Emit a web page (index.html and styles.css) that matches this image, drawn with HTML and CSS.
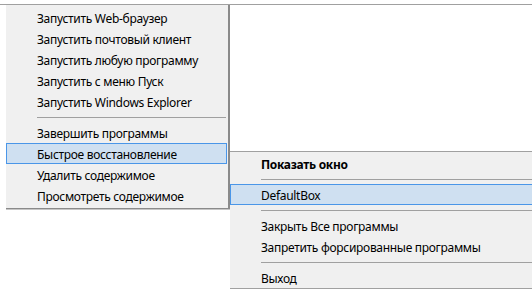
FILE: index.html
```html
<!DOCTYPE html>
<html lang="ru">
<head>
    <meta charset="UTF-8">
    <meta name="viewport" content="width=device-width, initial-scale=1.0">
    <title>Sandbox menu</title>
    <link rel="stylesheet" href="styles.css">
</head>
<body>
    <div class="topline"></div>

    <div class="menu menu-main">
        <div class="item">Запустить Web-браузер</div>
        <div class="item">Запустить почтовый клиент</div>
        <div class="item">Запустить любую программу</div>
        <div class="item">Запустить с меню Пуск</div>
        <div class="item">Запустить Windows Explorer</div>
        <div class="sep"></div>
        <div class="item">Завершить программы</div>
        <div class="item active">Быстрое восстановление</div>
        <div class="item">Удалить содержимое</div>
        <div class="item">Просмотреть содержимое</div>
    </div>

    <div class="menu menu-tray">
        <div class="item bold">Показать окно</div>
        <div class="sep"></div>
        <div class="item active">DefaultBox</div>
        <div class="sep"></div>
        <div class="item">Закрыть Все программы</div>
        <div class="item">Запретить форсированные программы</div>
        <div class="sep"></div>
        <div class="item">Выход</div>
    </div>
</body>
</html>
```

FILE: styles.css
```css
body {
    margin: 0;
    width: 532px;
    height: 290px;
    overflow: hidden;
    position: relative;
    background-color: white;
    font-family: "Noto Sans", sans-serif;
    font-size: 12px;
    letter-spacing: -0.3px;
    color: black;
}
.topline {
    margin-top: 4px;
    border-top: 1px solid #a0a0a0;
}
.menu {
    position: absolute;
    box-sizing: border-box;
    background-color: #f0f0f0;
}
.menu-main {
    left: 6px;
    top: 5px;
    width: 224px;
    padding: 2px 0;
    border-right: 2px solid #8a8a8a;
    border-bottom: 1px solid #8a8a8a;
    box-shadow: 0 1px 0 #c6c6c6;
}
.menu-tray {
    left: 230px;
    top: 151px;
    width: 320px;
    padding: 1px 0 0;
    border-top: 1px solid #a0a0a0;
    border-bottom: 1px solid #a0a0a0;
}
.item {
    height: 19px;
    line-height: 21px;
    padding-left: 30px;
    margin-right: 1px;
    border: 1px solid transparent;
    white-space: nowrap;
}
.item.active {
    background-color: #cfe0f1;
    border-color: #4a96e8;
}
.item.bold {
    font-weight: bold;
}
.sep {
    height: 1px;
    margin: 5px 2px 4px 31px;
    background-color: #a0a0a0;
}
```
